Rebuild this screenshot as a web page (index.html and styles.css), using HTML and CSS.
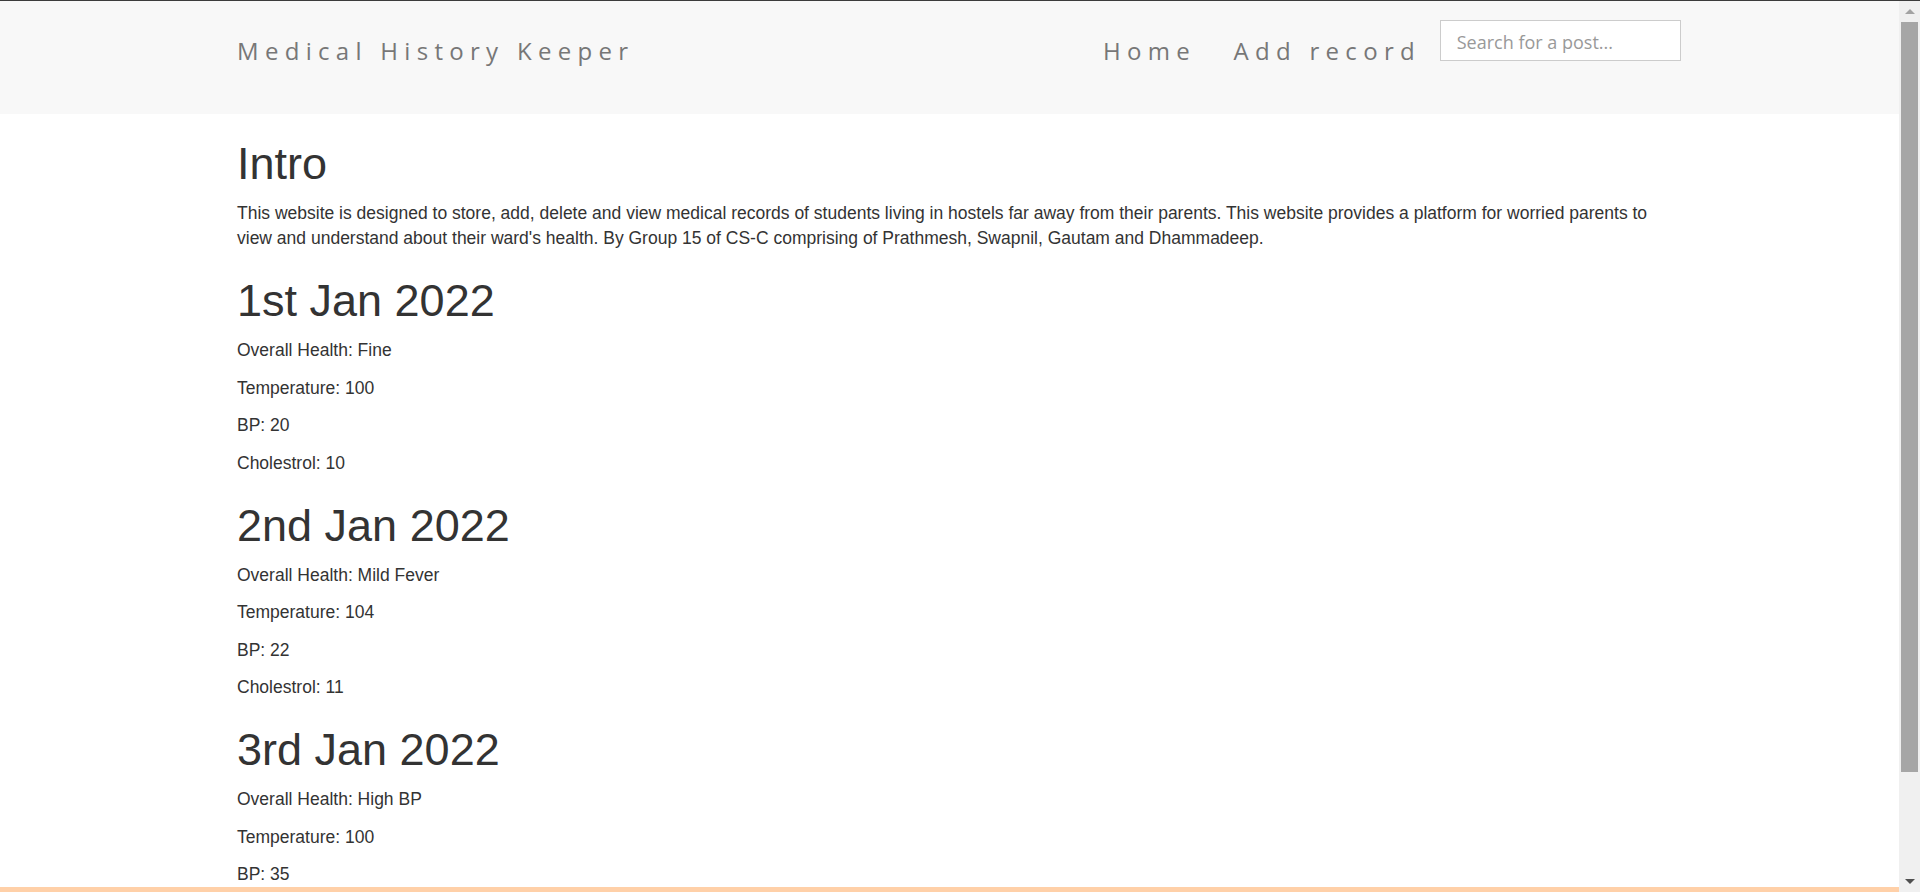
FILE: index.html
```html
<!DOCTYPE html>
<html lang="en">
<head>
<meta charset="utf-8">
<title>Medical History Keeper</title>
<link rel="stylesheet" href="styles.css">
</head>
<body>
<div class="frame-line"></div>
<div class="window">
  <div class="viewport">
    <header class="navbar">
      <div class="container nav-inner">
        <a class="brand" href="#">Medical History Keeper</a>
        <nav class="nav-right">
          <a class="nav-link" href="#">Home</a>
          <a class="nav-link" href="#">Add record</a>
          <input class="search" type="text" placeholder="Search for a post...">
        </nav>
      </div>
    </header>
    <main class="content">
      <div class="container">
        <h1>Intro</h1>
        <p>This website is designed to store, add, delete and view medical records of students living in hostels far away from their parents. This website provides a platform for worried parents to view and understand about their ward's health. By Group 15 of CS-C comprising of Prathmesh, Swapnil, Gautam and Dhammadeep.</p>

        <h1>1st Jan 2022</h1>
        <p>Overall Health: Fine</p>
        <p>Temperature: 100</p>
        <p>BP: 20</p>
        <p>Cholestrol: 10</p>

        <h1>2nd Jan 2022</h1>
        <p>Overall Health: Mild Fever</p>
        <p>Temperature: 104</p>
        <p>BP: 22</p>
        <p>Cholestrol: 11</p>

        <h1>3rd Jan 2022</h1>
        <p>Overall Health: High BP</p>
        <p>Temperature: 100</p>
        <p>BP: 35</p>
      </div>
    </main>
    <footer class="footer"></footer>
  </div>
  <div class="scrollbar">
    <div class="sb-btn"><span class="arrow-up"></span></div>
    <div class="sb-thumb"></div>
    <div class="sb-track"></div>
    <div class="sb-btn"><span class="arrow-down"></span></div>
  </div>
</div>
</body>
</html>
```
FILE: styles.css
```css
* { box-sizing: border-box; }

html, body {
  margin: 0;
  padding: 0;
  height: 100%;
  overflow: hidden;
}

body {
  font-family: "Liberation Sans", Arial, sans-serif;
  color: #333;
  background: #fff;
  display: flex;
  flex-direction: column;
}

.frame-line {
  height: 1px;
  background: #3c3c3c;
  flex: none;
}

.window {
  flex: 1;
  min-height: 0;
  display: flex;
}

.viewport {
  flex: 1;
  min-width: 0;
  display: flex;
  flex-direction: column;
}

.container {
  width: 1462.5px;
  margin: 0 auto;
  padding: 0 18.75px;
}

/* Navbar */
.navbar {
  flex: none;
  height: 113px;
  background: #f8f8f8;
}

.nav-inner {
  display: flex;
  align-items: flex-start;
  justify-content: space-between;
}

.brand,
.nav-link {
  font-family: "Open Sans", "DejaVu Sans", sans-serif;
  font-size: 24px;
  line-height: 30px;
  letter-spacing: 6.3px;
  color: #777;
  text-decoration: none;
  margin-top: 35px;
  white-space: nowrap;
}

.nav-right {
  display: flex;
  align-items: flex-start;
  margin-right: -18.75px;
}

.nav-link {
  padding: 0 18.75px;
}

.search {
  margin-top: 19px;
  width: 241px;
  height: 41px;
  border: 1px solid #ccc;
  background: #fff;
  padding: 2px 16px 0;
  font-family: "Open Sans", "DejaVu Sans", sans-serif;
  font-size: 18px;
  color: #555;
  outline: none;
}

.search::placeholder {
  color: #999;
}

/* Content */
.content {
  flex: 1;
  min-height: 0;
  overflow: hidden;
}

h1 {
  font-size: 45px;
  font-weight: 400;
  line-height: 49.5px;
  margin: 25px 0 12.5px;
}

p {
  font-size: 17.5px;
  line-height: 25px;
  margin: 0 0 12.5px;
}

.footer {
  flex: none;
  height: 5px;
  background: #ffd0a8;
}

/* Scrollbar */
.scrollbar {
  flex: none;
  width: 21px;
  background: #f0f0f0;
  display: flex;
  flex-direction: column;
}

.sb-btn {
  height: 21px;
  flex: none;
  display: flex;
  align-items: center;
  justify-content: center;
}

.arrow-up {
  width: 0;
  height: 0;
  border-left: 5px solid transparent;
  border-right: 5px solid transparent;
  border-bottom: 5px solid #a3a3a3;
}

.arrow-down {
  width: 0;
  height: 0;
  border-left: 5px solid transparent;
  border-right: 5px solid transparent;
  border-top: 5px solid #505050;
}

.sb-thumb {
  flex: none;
  height: 750px;
  margin: 0 2px 0 2px;
  background: #a6a6a6;
}

.sb-track {
  flex: 1;
}
```
